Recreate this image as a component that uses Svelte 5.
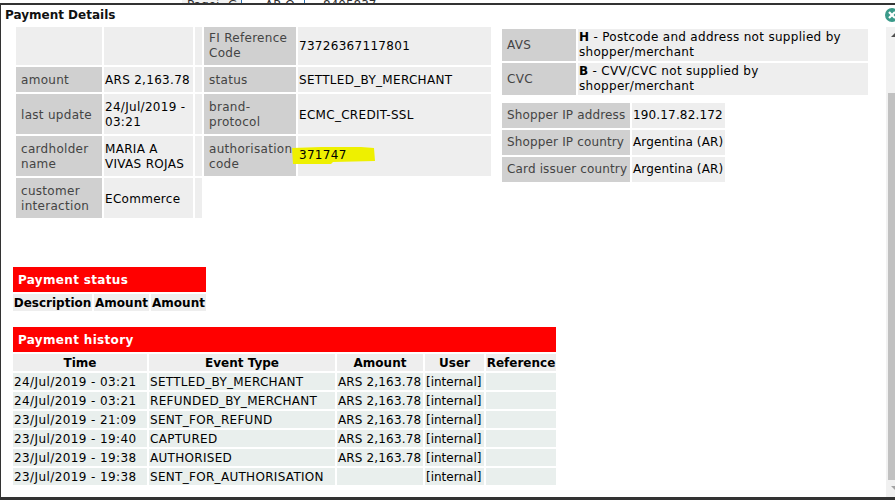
<script>
  const history = [
    ['24/Jul/2019 - 03:21', 'SETTLED_BY_MERCHANT', 'ARS 2,163.78'],
    ['24/Jul/2019 - 03:21', 'REFUNDED_BY_MERCHANT', 'ARS 2,163.78'],
    ['23/Jul/2019 - 21:09', 'SENT_FOR_REFUND', 'ARS 2,163.78'],
    ['23/Jul/2019 - 19:40', 'CAPTURED', 'ARS 2,163.78'],
    ['23/Jul/2019 - 19:38', 'AUTHORISED', 'ARS 2,163.78'],
    ['23/Jul/2019 - 19:38', 'SENT_FOR_AUTHORISATION', '']
  ];

  const shopper = [
    ['Shopper IP address', '190.17.82.172'],
    ['Shopper IP country', 'Argentina (AR)'],
    ['Card issuer country', 'Argentina (AR)']
  ];
</script>

<div class="behind">
  <span class="b1">Pagoi</span>
  <span class="b2">G</span>
  <span class="b3">AR O</span>
  <span class="b4">8405837</span>
</div>

<div class="dialog">
  <div class="title">Payment Details</div>
  <svg class="close" width="16" height="16" viewBox="0 0 16 16">
    <circle cx="8" cy="8" r="7" fill="#3b9a8a" />
    <path d="M5 5 11 11M11 5 5 11" stroke="#fff" stroke-width="2.2" />
  </svg>

  <div class="body">
    <div class="main">
      <div class="top">
        <table class="details">
          <colgroup>
            <col style="width:86px" /><col style="width:89px" /><col style="width:7px" /><col style="width:92px" /><col style="width:193px" />
          </colgroup>
          <tbody>
            <tr class="h38">
              <td class="v"></td><td class="v"></td><td class="v"></td>
              <td class="k">FI Reference Code</td><td class="v">73726367117801</td>
            </tr>
            <tr class="h25">
              <td class="k">amount</td><td class="v">ARS 2,163.78</td><td class="v"></td>
              <td class="k">status</td><td class="v">SETTLED_BY_MERCHANT</td>
            </tr>
            <tr class="h40">
              <td class="k">last update</td><td class="v">24/Jul/2019 - 03:21</td><td class="v"></td>
              <td class="k">brand-protocol</td><td class="v">ECMC_CREDIT-SSL</td>
            </tr>
            <tr class="h40">
              <td class="k">cardholder name</td><td class="v">MARIA A VIVAS ROJAS</td><td class="v"></td>
              <td class="k">authorisation code</td>
              <td class="v marked">
                <svg class="marker" width="86" height="19" viewBox="0 0 86 19">
                  <path d="M1 2 L30 1 L70 1 L83 2 L84 15 L42 16 L40 18 L2 18 Z" fill="#eef000" />
                </svg>
                <span class="code">371747</span>
              </td>
            </tr>
            <tr class="h40">
              <td class="k">customer interaction</td><td class="v">ECommerce</td><td class="v"></td>
            </tr>
          </tbody>
        </table>

        <div class="side">
          <table class="checks">
            <colgroup><col style="width:74px" /><col style="width:290px" /></colgroup>
            <tbody>
              <tr class="h32">
                <td class="k">AVS</td>
                <td class="v"><b>H</b> - Postcode and address not supplied by shopper/merchant</td>
              </tr>
              <tr class="h32">
                <td class="k">CVC</td>
                <td class="v"><b>B</b> - CVV/CVC not supplied by shopper/merchant</td>
              </tr>
            </tbody>
          </table>
          <table class="shopper">
            <colgroup><col style="width:128px" /><col style="width:93px" /></colgroup>
            <tbody>
              {#each shopper as [label, value]}
                <tr class="h25">
                  <td class="k">{label}</td>
                  <td class="v">{value}</td>
                </tr>
              {/each}
            </tbody>
          </table>
        </div>
      </div>

      <section class="status">
        <h3>Payment status</h3>
        <table class="grid">
          <colgroup><col style="width:79px" /><col style="width:55px" /><col style="width:55px" /></colgroup>
          <thead>
            <tr><th>Description</th><th>Amount</th><th>Amount</th></tr>
          </thead>
        </table>
      </section>

      <section class="history">
        <h3>Payment history</h3>
        <table class="grid">
          <colgroup>
            <col style="width:134px" /><col style="width:186px" /><col style="width:86px" /><col style="width:59px" /><col style="width:70px" />
          </colgroup>
          <thead>
            <tr><th>Time</th><th>Event Type</th><th>Amount</th><th>User</th><th>Reference</th></tr>
          </thead>
          <tbody>
            {#each history as [time, type, amount]}
              <tr>
                <td class="time">{time}</td>
                <td>{type}</td>
                <td class="amount">{amount}</td>
                <td class="user">[internal]</td>
                <td></td>
              </tr>
            {/each}
          </tbody>
        </table>
      </section>
    </div>

    <div class="scrollbar">
      <div class="arrow up"></div>
      <div class="thumb"></div>
      <div class="arrow down"></div>
    </div>
  </div>
</div>

<style>
  :global(body) {
    margin: 0;
    background: #fff;
  }

  .behind {
    height: 3px;
    overflow: hidden;
    display: flex;
    font: 12px/10px "DejaVu Sans", sans-serif;
    color: #333;
    background: #fff;
    padding-left: 182px;
  }

  .behind span {
    display: block;
    height: 3px;
    white-space: nowrap;
    box-sizing: border-box;
  }

  .b1 { width: 40px; padding-left: 5px; background: #f2f2f2; }
  .b2 { width: 20px; padding-left: 6px; background: #f2f2f2; border-right: 1px solid #2a6fb0; }
  .b3 { width: 63px; padding-left: 23px; border-right: 1px solid #2a6fb0; }
  .b4 { width: 70px; padding-left: 18px; }

  .dialog {
    position: relative;
    box-sizing: border-box;
    height: 497px;
    overflow: hidden;
    display: flex;
    flex-direction: column;
    background: #fff;
    border-top: 2px solid #333;
    border-left: 1px solid #333;
    border-bottom: 3px solid #333;
    font: 12px/15px "DejaVu Sans", Verdana, sans-serif;
    letter-spacing: 0.3px;
    color: #000;
  }

  .title {
    height: 22px;
    flex: none;
    padding-left: 4px;
    font-weight: bold;
    font-size: 12px;
    line-height: 21px;
    letter-spacing: 0;
    color: #111;
  }

  .close {
    position: absolute;
    top: 2px;
    right: -5px;
  }

  .body {
    flex: 1;
    min-height: 0;
    display: flex;
  }

  .main {
    flex: 1;
    min-width: 0;
    padding-left: 12px;
  }

  .scrollbar {
    width: 9px;
    flex: none;
    display: flex;
    flex-direction: column;
    align-items: flex-end;
    background: #f1f1f1;
  }

  .thumb {
    flex: 1;
    width: 7px;
    margin: 49px 0 0;
    background: #c1c1c1;
  }

  .arrow {
    flex: none;
    width: 4px;
    height: 17px;
    position: relative;
    overflow: hidden;
  }

  .arrow::before {
    content: "";
    position: absolute;
    left: 0;
    top: 6px;
    border-left: 4px solid transparent;
    border-right: 4px solid transparent;
    border-bottom: 4px solid #505050;
  }

  .arrow.down::before {
    border-bottom: 0;
    border-top: 4px solid #a3a3a3;
  }

  .top {
    display: flex;
    align-items: flex-start;
    gap: 7px;
    margin-left: 1px;
    height: 240px;
  }

  table {
    border-collapse: separate;
    border-spacing: 2px;
    table-layout: fixed;
  }

  .details {
    width: 479px;
    margin-top: -2px;
  }

  .checks {
    width: 370px;
  }

  .shopper {
    width: 227px;
    letter-spacing: 0.15px;
    white-space: nowrap;
  }

  .k {
    background: #d0d0d0;
    color: #444;
    padding: 2px 5px 0;
  }

  .v {
    background: #eee;
    padding: 2px 1px 0;
  }

  .checks .k,
  .checks .v,
  .shopper .k,
  .shopper .v {
    padding-top: 0;
  }

  .shopper .k {
    padding-right: 0;
  }

  .h25 { height: 25px; }
  .h32 { height: 32px; }
  .h38 { height: 38px; }
  .h40 { height: 40px; }

  .details tr:first-child td {
    padding-top: 0;
  }

  .marked {
    position: relative;
  }

  .marker {
    position: absolute;
    left: -7px;
    top: 10px;
  }

  .code {
    position: relative;
    top: -2px;
  }

  .side {
    display: flex;
    flex-direction: column;
    gap: 4px;
  }

  section {
    width: max-content;
  }

  .history {
    margin-top: 16px;
  }

  h3 {
    margin: 0;
    height: 25px;
    background: #f00;
    color: #fff;
    font-size: 12px;
    line-height: 26px;
    font-weight: bold;
    letter-spacing: 0.33px;
    padding-left: 5px;
  }

  .grid {
    margin: 0 -2px -2px;
  }

  .status .grid {
    width: 197px;
  }

  .history .grid {
    width: 547px;
  }

  .grid th {
    height: 15px;
    padding: 2px 0 0;
    background: #eee;
    font-weight: bold;
    letter-spacing: 0;
    line-height: 15px;
    white-space: nowrap;
  }

  .grid td {
    height: 15px;
    padding: 2px 1px 0;
    background: #e9efed;
    line-height: 15px;
    white-space: nowrap;
  }

  .grid .time {
    letter-spacing: 0.4px;
  }

  .grid .amount {
    letter-spacing: 0.15px;
  }

  .grid .user {
    letter-spacing: 0;
  }
</style>
